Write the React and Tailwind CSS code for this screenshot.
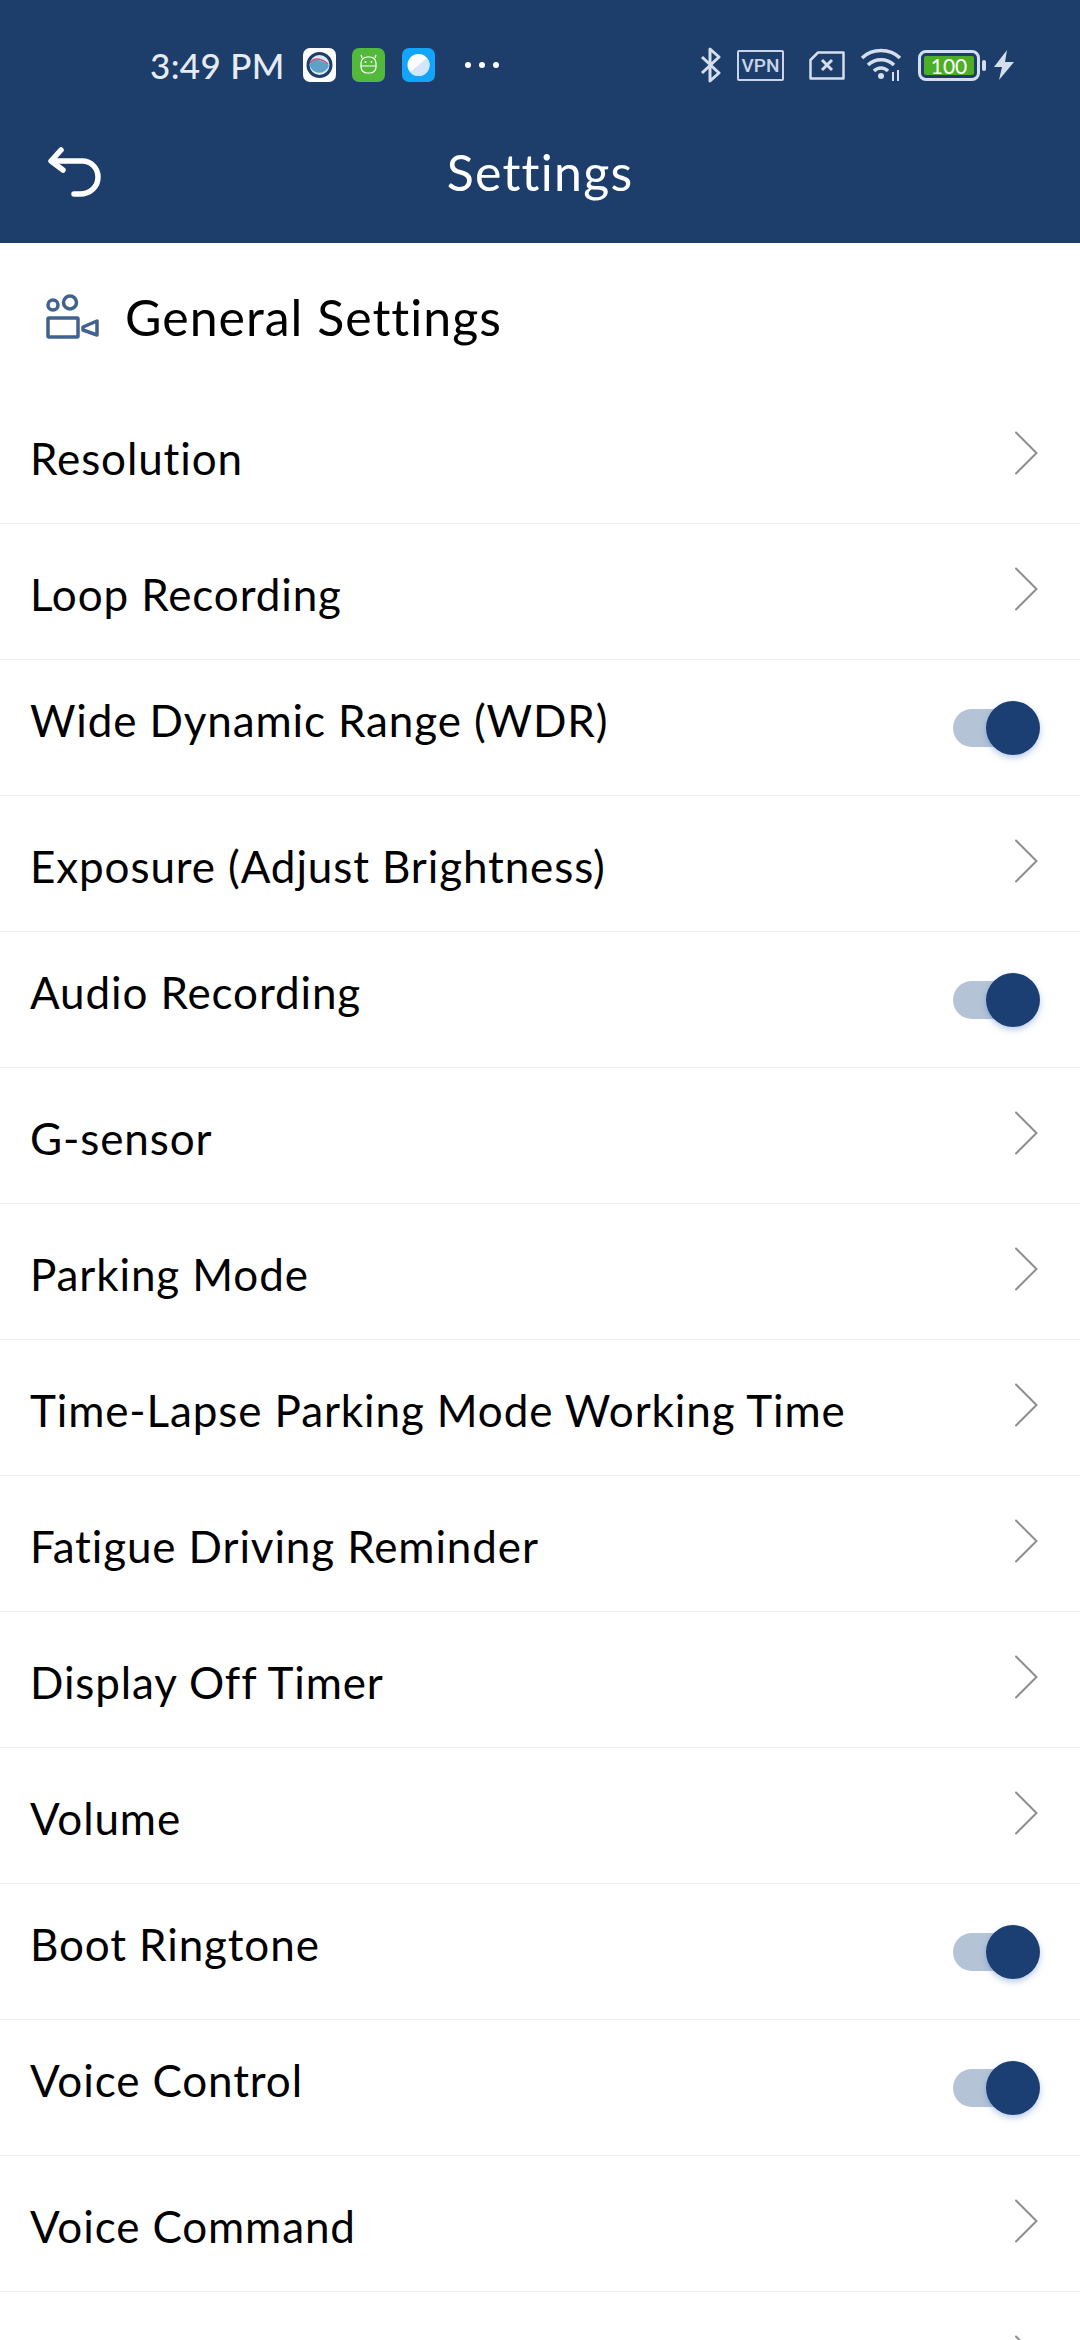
import React from 'react';

const rows = [
  { label: 'Resolution' },
  { label: 'Loop Recording' },
  { label: 'Wide Dynamic Range (WDR)', toggle: true },
  { label: 'Exposure (Adjust Brightness)' },
  { label: 'Audio Recording', toggle: true },
  { label: 'G-sensor' },
  { label: 'Parking Mode' },
  { label: 'Time-Lapse Parking Mode Working Time' },
  { label: 'Fatigue Driving Reminder' },
  { label: 'Display Off Timer' },
  { label: 'Volume' },
  { label: 'Boot Ringtone', toggle: true },
  { label: 'Voice Control', toggle: true },
  { label: 'Voice Command' },
  { label: '' },
];

const Chevron = () => (
  <svg width="24" height="44" viewBox="0 0 24 44" fill="none" className="mb-[6px]">
    <path d="M2 1.5 L22.5 22 L2 42.5" stroke="#8e8e93" strokeWidth="2" strokeLinecap="round" strokeLinejoin="round" />
  </svg>
);

const Toggle = () => (
  <div className="relative w-[87px] h-[54px] flex items-center">
    <div className="w-[77px] h-[38px] rounded-full bg-[#b5c3d6]" />
    <div className="absolute right-0 top-0 w-[54px] h-[54px] rounded-full bg-[#1c3f73] shadow-[0_3px_6px_rgba(60,110,190,0.35)]" />
  </div>
);

const AppIcons = () => (
  <div className="flex items-center ml-[18px]">
    <svg width="33" height="34" viewBox="0 0 33 34">
      <rect width="33" height="34" rx="7" fill="#fff" />
      <circle cx="16.5" cy="17" r="13" fill="#1d3d6b" />
      <circle cx="16.5" cy="17" r="10" fill="#d9e9f2" />
      <path d="M6.5 17 C10 9 16 11 26 17 A10 10 0 0 1 6.5 17 Z" fill="#5aa3c6" />
      <path d="M7 15 C11 9 18 10 25 16" stroke="#c2557f" strokeWidth="1.5" fill="none" />
    </svg>
    <svg width="33" height="34" viewBox="0 0 33 34" className="ml-[16px]">
      <rect width="33" height="34" rx="7" fill="#53b93a" />
      <path d="M10 10 L9 7 M23 10 L24 7" stroke="#fff" strokeWidth="1.2" />
      <rect x="9" y="9" width="15" height="16" rx="6" fill="none" stroke="#fff" strokeWidth="1.2" />
      <path d="M9 18 H24" stroke="#fff" strokeWidth="1" />
      <circle cx="13.5" cy="14" r="1" fill="#fff" />
      <circle cx="19.5" cy="14" r="1" fill="#fff" />
    </svg>
    <svg width="33" height="34" viewBox="0 0 33 34" className="ml-[17px]">
      <rect width="33" height="34" rx="7" fill="#12a5fb" />
      <circle cx="16.5" cy="17" r="11" fill="#fff" />
      <path d="M8 24 L25 10 A11 11 0 0 1 8 24 Z" fill="#d4e6fa" />
    </svg>
    <div className="flex items-center gap-[8px] ml-[30px]">
      <div className="w-[6px] h-[6px] rounded-full bg-white" />
      <div className="w-[6px] h-[6px] rounded-full bg-white" />
      <div className="w-[6px] h-[6px] rounded-full bg-white" />
    </div>
  </div>
);

const SystemIcons = () => (
  <div className="flex items-center text-[#d5deec]">
    <svg width="22" height="36" viewBox="0 0 22 36" fill="none" stroke="currentColor" strokeWidth="3">
      <path d="M2 10 L19 26 L10 34 V2 L19 10 L2 26" strokeLinejoin="round" />
    </svg>
    <div className="ml-[15px] w-[47px] h-[31px] border-2 border-[#c9d5e6] rounded-[2px] flex items-center justify-center text-[19px] font-medium leading-none text-[#c9d5e6] font-['Roboto',sans-serif]">
      VPN
    </div>
    <svg width="36" height="29" viewBox="0 0 36 29" fill="none" stroke="currentColor" className="ml-[25px]">
      <path d="M9 1.5 H34.5 V27.5 H1.5 V9 Z" strokeWidth="2.5" strokeLinejoin="round" />
      <path d="M13 9 L23 19 M23 9 L13 19" strokeWidth="3" />
    </svg>
    <svg width="42" height="34" viewBox="0 0 42 34" fill="none" stroke="currentColor" strokeWidth="3.5" className="ml-[15px]">
      <path d="M2 10 C12 0 30 0 40 10" />
      <path d="M8 17 C15 10 27 10 34 17" />
      <path d="M14 23 C18 19 24 19 28 23" />
      <circle cx="21" cy="28" r="3" fill="currentColor" stroke="none" />
      <path d="M33 24 V33 M38 22 V33" strokeWidth="2" />
    </svg>
    <div className="ml-[16px] w-[62px] h-[31px] border-[3px] border-[#d5deec] rounded-[8px] p-[3px] flex">
      <div className="flex-1 rounded-[2px] bg-[#4caf25] flex items-center justify-center text-[21px] leading-none text-white font-['Lato',sans-serif]">
        100
      </div>
    </div>
    <div className="ml-[2px] w-[4px] h-[11px] rounded-full bg-[#d5deec]" />
    <svg width="20" height="30" viewBox="0 0 20 30" fill="currentColor" className="ml-[8px]">
      <path d="M13 0 L0 17 H8 L5 30 L20 12 H11 Z" />
    </svg>
  </div>
);

const App = () => {
  return (
    <div className="w-[1080px] h-[2340px] overflow-hidden bg-white font-['Lato',sans-serif] text-black">
      <header className="bg-[#1d3d6b] h-[243px] flex flex-col">
        <div className="h-[130px] flex items-center justify-between pl-[150px] pr-[66px]">
          <div className="flex items-center">
            <span className="text-[35px] leading-none font-medium tracking-[0.01em] text-[#e6ebf3]">3:49 PM</span>
            <AppIcons />
          </div>
          <SystemIcons />
        </div>
        <div className="relative flex items-center justify-center h-[84px]">
          <svg width="54" height="50" viewBox="0 0 54 50" fill="none" stroke="#fff" strokeWidth="5.5" strokeLinecap="round" strokeLinejoin="round" className="absolute left-[48px] top-[17px]">
            <path d="M13 3 L3 14 L15 23" />
            <path d="M4 14 H34 C44 14 50 22 50 30 C50 40 42 47 32 47 H26" />
          </svg>
          <h1 className="text-[50px] leading-none font-normal tracking-[0.025em] text-white">Settings</h1>
        </div>
      </header>

      <div className="h-[145px] flex items-center pl-[46px] pt-[3px]">
        <svg width="54" height="46" viewBox="0 0 54 46" fill="none" stroke="#41628f" strokeWidth="3.5">
          <circle cx="7" cy="11" r="5" />
          <circle cx="24" cy="8.5" r="6.5" />
          <rect x="2" y="24" width="30" height="19" rx="1" />
          <path d="M37 33 L51 27 V41 L37 36 Z" strokeLinejoin="round" />
        </svg>
        <h2 className="ml-[25px] text-[50px] leading-none font-normal tracking-[0.02em]">General Settings</h2>
      </div>

      <div>
        {rows.map((row) => (
          <div key={row.label || 'more'} className="h-[136px] flex items-center justify-between border-b border-[#eeeeee] pl-[30px]">
            <span className={`text-[44px] leading-none tracking-[0.02em] ${row.toggle ? 'mb-4' : 'mt-1'}`}>{row.label}</span>
            {row.toggle ? (
              <div className="pr-[40px]"><Toggle /></div>
            ) : (
              <div className="pr-[42px] flex"><Chevron /></div>
            )}
          </div>
        ))}
      </div>
    </div>
  );
};

export default App;
